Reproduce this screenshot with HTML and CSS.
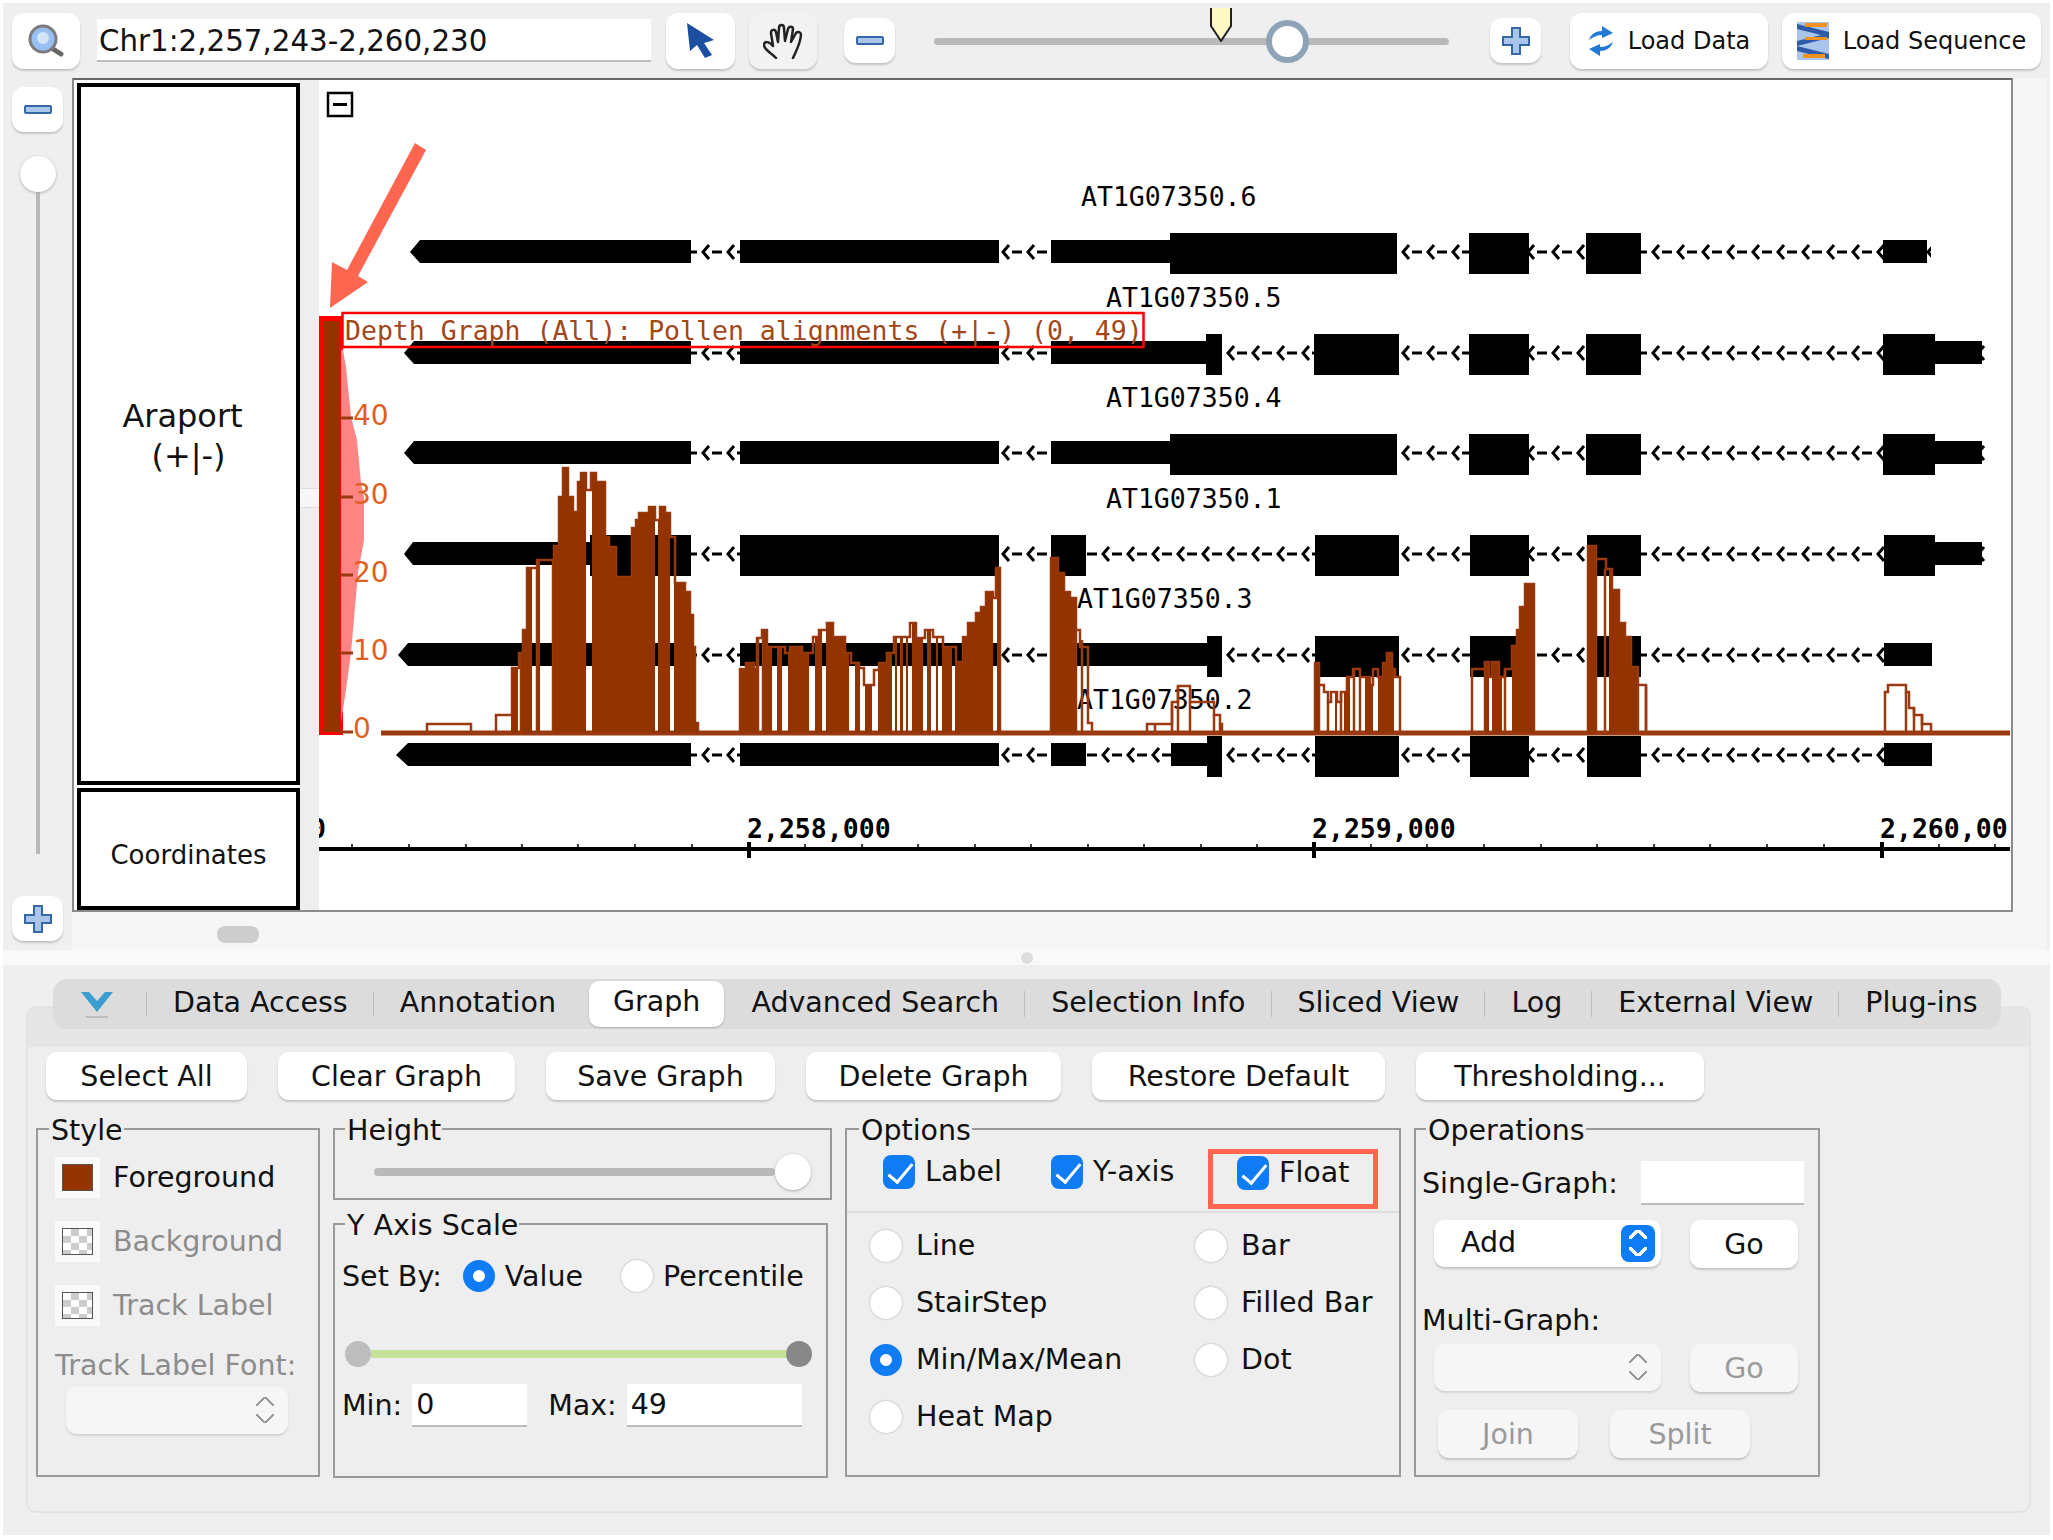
FILE: index.html
```html
<!DOCTYPE html>
<html lang="en">
<head>
    <meta charset="UTF-8">
    <meta name="viewport" content="width=device-width, initial-scale=1.0">
    <title>Genome Browser</title>
    <link rel="stylesheet" href="styles.css">
</head>
<body>
    <div class="app">
        <div class="toolbar">
            <button type="button" class="tool tool-search">
                <svg width="36" height="33" viewBox="0 0 36 33"><path d="M25 25l8 5" stroke="#666" stroke-width="5" stroke-linecap="round"/><circle cx="15" cy="15" r="13" fill="#97c0f0" stroke="#7b7b7b" stroke-width="3"/><circle cx="15" cy="14" r="6" fill="#d5e5f9"/></svg>
            </button>
            <div class="location">Chr1:2,257,243-2,260,230</div>
            <button type="button" class="tool tool-pointer">
                <svg width="28" height="36" viewBox="0 0 28 36"><path d="M0 0L3 28L10 22L18 35L25 32L17 20L27 17Z" fill="#1c4fa0"/></svg>
            </button>
            <button type="button" class="tool tool-hand">
                <svg width="40" height="36" viewBox="0 0 40 36" fill="none" stroke="#222" stroke-width="2.5" stroke-linecap="round" stroke-linejoin="round"><path d="M13 35C9 30 1 27 1 22C1 18 6 18 10 23L8 10C8 6 12 6 13 9L15 19L16 5C16 1 21 1 21 5L22 18L25 6C26 3 30 3 30 6L28 19L33 10C35 8 38 9 38 12C37 22 33 28 30 35"/></svg>
            </button>
            <button type="button" class="tool tool-small tool-minus"><span class="minus-bar"></span></button>
            <div class="zoom-slider">
                <svg class="zoom-marker" width="24" height="34" viewBox="0 0 24 34"><path d="M2 0V18L12 33L22 18V0" fill="#fdf8c4" stroke="#222" stroke-width="2"/></svg>
                <span class="zoom-thumb"></span>
            </div>
            <button type="button" class="tool tool-small tool-plus"><span class="plus-sign"></span></button>
            <button type="button" class="tool tool-load tool-data">
                <svg width="26" height="30" viewBox="0 0 26 30" fill="#2079d6"><path d="M1 14C3 8 8 5 14 5V0L25 7L14 12V9C9 9 5 11 1 14Z"/><path d="M25 16C23 22 18 25 12 25V30L1 23L12 18V21C17 21 21 19 25 16Z"/></svg>
                Load Data
            </button>
            <button type="button" class="tool tool-load tool-sequence">
                <svg width="32" height="38" viewBox="0 0 32 38"><rect width="32" height="38" fill="#a9c5ec"/><path d="M0 2L32 10V15L0 7ZM32 16L0 24V19L32 11ZM0 24L32 32V37L0 29Z" fill="#2f5aa8"/><path d="M8 1H30V5H8ZM8 15H30V18H8ZM6 32H28V36H6Z" fill="#f0921e"/></svg>
                Load Sequence
            </button>
        </div>

        <div class="browser">
            <div class="rail">
                <button type="button" class="tool tool-small rail-minus"><span class="minus-bar"></span></button>
                <div class="rail-slider"><span class="rail-thumb"></span></div>
                <button type="button" class="tool tool-small rail-plus"><span class="plus-sign"></span></button>
            </div>
            <div class="view">
                <div class="frame">
                    <div class="track-labels">
                        <div class="track-label track-label-main"><span class="track-name">Araport</span>(+|-)</div>
                        <div class="track-label track-label-coords">Coordinates</div>
                    </div>
                    <div class="strip"><span class="strip-grip"></span></div>
                    <svg class="tracks" width="1692" height="830" viewBox="319 80 1692 830">
                        <defs>
                            <pattern id="intron" patternUnits="userSpaceOnUse" x="0" y="-10" width="25" height="20">
                                <path d="M9 3L3 10L9 17M12 10H22" fill="none" stroke="#000" stroke-width="3"/>
                            </pattern>
                            <clipPath id="graph-solid">
                                <rect x="511" y="300" width="7" height="440"/>
                                <rect x="521" y="300" width="11" height="440"/>
                                <rect x="537" y="300" width="3" height="440"/>
                                <rect x="553" y="300" width="33" height="440"/>
                                <rect x="592" y="300" width="63" height="440"/>
                                <rect x="658" y="300" width="12" height="440"/>
                                <rect x="674" y="300" width="26" height="440"/>
                                <rect x="740" y="300" width="18" height="440"/>
                                <rect x="763" y="300" width="9" height="440"/>
                                <rect x="777" y="300" width="5" height="440"/>
                                <rect x="788" y="300" width="21" height="440"/>
                                <rect x="815" y="300" width="7" height="440"/>
                                <rect x="826" y="300" width="23" height="440"/>
                                <rect x="855" y="300" width="5" height="440"/>
                                <rect x="865" y="300" width="7" height="440"/>
                                <rect x="878" y="300" width="14" height="440"/>
                                <rect x="895" y="300" width="2" height="440"/>
                                <rect x="900" y="300" width="3" height="440"/>
                                <rect x="906" y="300" width="2" height="440"/>
                                <rect x="912" y="300" width="11" height="440"/>
                                <rect x="927" y="300" width="4" height="440"/>
                                <rect x="936" y="300" width="2" height="440"/>
                                <rect x="942" y="300" width="10" height="440"/>
                                <rect x="955" y="300" width="38" height="440"/>
                                <rect x="997" y="300" width="3" height="440"/>
                                <rect x="1051" y="300" width="25" height="440"/>
                                <rect x="1315" y="300" width="4" height="440"/>
                                <rect x="1327" y="300" width="2" height="440"/>
                                <rect x="1335" y="300" width="2" height="440"/>
                                <rect x="1344" y="300" width="6" height="440"/>
                                <rect x="1365" y="300" width="8" height="440"/>
                                <rect x="1378" y="300" width="16" height="440"/>
                                <rect x="1485" y="300" width="4" height="440"/>
                                <rect x="1492" y="300" width="10" height="440"/>
                                <rect x="1512" y="300" width="22" height="440"/>
                                <rect x="1588" y="300" width="8" height="440"/>
                                <rect x="1609" y="300" width="28" height="440"/>
                            </clipPath>
                        </defs>

                        <rect class="collapse-box" x="328" y="93" width="24" height="23"/>
                        <path class="collapse-bar" d="M333 104.5H347"/>

                        <!-- gene models -->
                        <text class="gene-label" x="1081" y="206">AT1G07350.6</text>
                        <g transform="translate(0,252)">
                            <rect fill="url(#intron)" x="691" y="-10" width="1240" height="20"/>
                            <path d="M410 0L420 -12H691V11H420Z"/>
                            <rect class="thin" x="740" width="259"/>
                            <rect class="thin" x="1051" width="119"/>
                            <rect class="thick" x="1170" width="227"/>
                            <rect class="thick" x="1469" width="60"/>
                            <rect class="thick" x="1586" width="55"/>
                            <rect class="thin" x="1883" width="44"/>
                        </g>
                        <text class="gene-label" x="1106" y="307">AT1G07350.5</text>
                        <g transform="translate(0,353)">
                            <rect fill="url(#intron)" x="691" y="-10" width="1295" height="20"/>
                            <path d="M404 0L414 -12H691V11H414Z"/>
                            <rect class="thin" x="740" width="259"/>
                            <rect class="thin" x="1051" width="155"/>
                            <rect class="thick" x="1206" width="16"/>
                            <rect class="thick" x="1314" width="85"/>
                            <rect class="thick" x="1469" width="60"/>
                            <rect class="thick" x="1586" width="55"/>
                            <rect class="thick" x="1883" width="52"/>
                            <rect class="thin" x="1935" width="47"/>
                        </g>
                        <text class="gene-label" x="1106" y="407">AT1G07350.4</text>
                        <g transform="translate(0,453)">
                            <rect fill="url(#intron)" x="691" y="-10" width="1295" height="20"/>
                            <path d="M404 0L414 -12H691V11H414Z"/>
                            <rect class="thin" x="740" width="259"/>
                            <rect class="thin" x="1051" width="119"/>
                            <rect class="thick" x="1170" width="227"/>
                            <rect class="thick" x="1469" width="60"/>
                            <rect class="thick" x="1586" width="55"/>
                            <rect class="thick" x="1883" width="52"/>
                            <rect class="thin" x="1935" width="47"/>
                        </g>
                        <text class="gene-label" x="1106" y="508">AT1G07350.1</text>
                        <g transform="translate(0,554)">
                            <rect fill="url(#intron)" x="691" y="-10" width="1295" height="20"/>
                            <path d="M404 0L413 -12H590V11H413Z"/>
                            <rect class="thick" x="590" width="101"/>
                            <rect class="thick" x="740" width="259"/>
                            <rect class="thick" x="1051" width="35"/>
                            <rect class="thick" x="1315" width="84"/>
                            <rect class="thick" x="1470" width="59"/>
                            <rect class="thick" x="1587" width="54"/>
                            <rect class="thick" x="1884" width="51"/>
                            <rect class="thin" x="1935" width="47"/>
                        </g>
                        <text class="gene-label" x="1077" y="608">AT1G07350.3</text>
                        <g transform="translate(0,655)">
                            <rect fill="url(#intron)" x="691" y="-10" width="1195" height="20"/>
                            <path d="M398 0L408 -12H691V11H408Z"/>
                            <rect class="thin" x="740" width="259"/>
                            <rect class="thin" x="1051" width="156"/>
                            <rect class="thick" x="1207" width="15"/>
                            <rect class="thick" x="1315" width="84"/>
                            <rect class="thick" x="1470" width="59"/>
                            <rect class="thick" x="1587" width="54"/>
                            <rect class="thin" x="1884" width="48"/>
                        </g>
                        <text class="gene-label" x="1077" y="709">AT1G07350.2</text>
                        <g transform="translate(0,755)">
                            <rect fill="url(#intron)" x="691" y="-10" width="1195" height="20"/>
                            <path d="M396 0L408 -12H691V11H408Z"/>
                            <rect class="thin" x="740" width="259"/>
                            <rect class="thin" x="1051" width="35"/>
                            <rect class="thin" x="1171" width="36"/>
                            <rect class="thick" x="1207" width="15"/>
                            <rect class="thick" x="1315" width="84"/>
                            <rect class="thick" x="1470" width="59"/>
                            <rect class="thick" x="1587" width="54"/>
                            <rect class="thin" x="1884" width="48"/>
                        </g>

                        <!-- depth graph -->
                        <path class="graph-base" d="M381 733H2010"/>
                        <path class="graph-line" d="M381 733H427V724H471V733H496V715H512V668H519V653H523V630H527V568H537V560H554V546H559V497H563V468H568V497H573V512H578V482H581V473H586V490H591V473H596V482H605V537H609V547H616V577H632V528H636V520H639V513H649V507H655V520H660V507H665V513H670V537H675V583H685V592H690V615H693V647H695V723H698V733H740V669H746V663H754V669H757V638H762V630H767V647H785V653H790V647H802V653H813V637H819V630H827V623H833V637H845V653H851V663H859V668H864V685H874V670H879V663H887V653H894V637H910V623H916V638H925V630H933V637H943V647H956V662H963V637H968V623H976V613H981V607H986V592H993V598H996V568H1000V733H1051V558H1058V573H1064V592H1070V598H1076V630H1080V647H1088V723H1092V733H1147V724H1172V702H1178V686H1190V702H1214V715H1220V724H1222V733H1315V663H1319V685H1324V692H1328V702H1331V692H1337V702H1341V692H1347V677H1353V669H1360V677H1370V685H1373V669H1378V677H1383V663H1387V653H1392V669H1395V677H1400V733H1472V669H1485V662H1489V677H1492V662H1499V677H1505V669H1512V646H1517V630H1520V607H1525V584H1534V733H1588V546H1596V559H1606V569H1612V590H1619V623H1625V637H1631V667H1638V685H1646V733H1885V692H1888V685H1906V692H1909V708H1914V715H1922V724H1931V733H2010"/>
                        <path class="graph-line" d="M1172 733V702M1178 733V686M1190 733V702M1214 733V715M1220 733V724M1155 733V724M1082 733V640M1076 733V630M1319 733V685M1328 733V702M1341 733V692M1354 733V669M1360 733V677M1485 733V662M1505 733V669M1596 733V559M1605 733V569M1638 733V685M1646 733V685M1906 733V692M1914 733V708M1922 733V715M537 733V568M553 733V560M521 733V653M513 733V668M758 733V638M763 733V630"/>
                        <path class="graph-fill" clip-path="url(#graph-solid)" d="M381 733H427V724H471V733H496V715H512V668H519V653H523V630H527V568H537V560H554V546H559V497H563V468H568V497H573V512H578V482H581V473H586V490H591V473H596V482H605V537H609V547H616V577H632V528H636V520H639V513H649V507H655V520H660V507H665V513H670V537H675V583H685V592H690V615H693V647H695V723H698V733H740V669H746V663H754V669H757V638H762V630H767V647H785V653H790V647H802V653H813V637H819V630H827V623H833V637H845V653H851V663H859V668H864V685H874V670H879V663H887V653H894V637H910V623H916V638H925V630H933V637H943V647H956V662H963V637H968V623H976V613H981V607H986V592H993V598H996V568H1000V733H1051V558H1058V573H1064V592H1070V598H1076V733H1315V663H1319V685H1324V692H1328V702H1331V692H1337V702H1341V692H1347V677H1353V669H1360V677H1370V685H1373V669H1378V677H1383V663H1387V653H1392V669H1395V677H1400V733H1472V669H1485V662H1489V677H1492V662H1499V677H1505V669H1512V646H1517V630H1520V607H1525V584H1534V733H1588V546H1596V559H1606V569H1612V590H1619V623H1625V637H1631V667H1638V685H1638V733Z"/>

                        <!-- y axis -->
                        <rect class="axis-border" x="319" y="316" width="24" height="419"/>
                        <rect class="axis-bar" x="323" y="321" width="17" height="411"/>
                        <path class="axis-dist" d="M343 350L346 367L351 417L357 440L361 483L364 497V540L358 573L355 607L351 653L346 690L341 723V350Z"/>
                        <path class="axis-tick" d="M340 732H353M340 653H353M340 575H353M340 497H353M340 418H353"/>
                        <text class="axis-num" x="353" y="738">0</text>
                        <text class="axis-num" x="353" y="660">10</text>
                        <text class="axis-num" x="353" y="582">20</text>
                        <text class="axis-num" x="353" y="504">30</text>
                        <text class="axis-num" x="353" y="425">40</text>

                        <rect class="graph-label-box" x="342.5" y="313" width="801" height="34"/>
                        <text class="graph-label" x="345" y="340">Depth Graph (All): Pollen alignments (+|-) (0, 49)</text>

                        <!-- coordinates -->
                        <text class="coord-label" x="326" y="838" text-anchor="end">0</text>
                        <text class="coord-label" x="747" y="838">2,258,000</text>
                        <text class="coord-label" x="1312" y="838">2,259,000</text>
                        <text class="coord-label" x="1880" y="838">2,260,00</text>
                        <path class="coord-line" d="M319 849H2010"/>
                        <path class="coord-major" d="M749 842V858M1314 842V858M1882 842V858"/>
                        <path class="coord-minor" d="M352 844V849M409 844V849M466 844V849M522 844V849M578 844V849M635 844V849M692 844V849M805 844V849M862 844V849M918 844V849M975 844V849M1031 844V849M1088 844V849M1144 844V849M1201 844V849M1257 844V849M1371 844V849M1427 844V849M1484 844V849M1541 844V849M1597 844V849M1654 844V849M1710 844V849M1767 844V849M1824 844V849M1939 844V849M1995 844V849"/>

                        <!-- annotation arrow -->
                        <path class="callout-arrow" d="M415 143L426 150L358 276L368 282L330 308L332 262L347 270Z"/>
                    </svg>
                </div>
                <div class="hscroll"><span class="hscroll-thumb"></span></div>
            </div>
        </div>

        <div class="splitter"><span class="splitter-dot"></span></div>

        <div class="panel">
            <div class="pane">
                <div class="tabs">
                    <span class="tab tab-toggle">
                        <svg width="34" height="28" viewBox="0 0 34 28"><path d="M1 1H9L17 10L25 1H33L17 21Z" fill="#3a9fd0"/><path d="M6 26H28" stroke="#bdbdbd" stroke-width="2"/></svg>
                    </span>
                    <span class="tab">Data Access</span>
                    <span class="tab">Annotation</span>
                    <span class="tab tab-active">Graph</span>
                    <span class="tab tab-after-active">Advanced Search</span>
                    <span class="tab">Selection Info</span>
                    <span class="tab">Sliced View</span>
                    <span class="tab">Log</span>
                    <span class="tab tab-external">External View</span>
                    <span class="tab">Plug-ins</span>
                </div>
                <div class="pane-body">
                    <div class="actions">
                        <button type="button" class="btn btn-select">Select All</button>
                        <button type="button" class="btn btn-clear">Clear Graph</button>
                        <button type="button" class="btn btn-save">Save Graph</button>
                        <button type="button" class="btn btn-delete">Delete Graph</button>
                        <button type="button" class="btn btn-restore">Restore Default</button>
                        <button type="button" class="btn btn-threshold">Thresholding...</button>
                    </div>
                    <div class="groups">
                        <fieldset class="group group-style">
                            <legend>Style</legend>
                            <div class="style-row">
                                <span class="swatch"><span class="swatch-fill"></span></span>
                                Foreground
                            </div>
                            <div class="style-row is-off">
                                <span class="swatch"><span class="swatch-fill swatch-empty"></span></span>
                                Background
                            </div>
                            <div class="style-row is-off">
                                <span class="swatch"><span class="swatch-fill swatch-empty"></span></span>
                                Track Label
                            </div>
                            <div class="font-label is-off">Track Label Font:</div>
                            <div class="select select-font is-disabled"><span class="stepper"></span></div>
                        </fieldset>

                        <div class="group-stack">
                            <fieldset class="group group-height">
                                <legend>Height</legend>
                                <div class="height-slider"><span class="height-thumb"></span></div>
                            </fieldset>
                            <fieldset class="group group-scale">
                                <legend>Y Axis Scale</legend>
                                <div class="setby-row">
                                    <span class="setby-label">Set By:</span>
                                    <span class="radio radio-on"></span><span class="setby-value">Value</span>
                                    <span class="radio"></span><span>Percentile</span>
                                </div>
                                <div class="range">
                                    <span class="range-knob"></span>
                                    <span class="range-bar"></span>
                                    <span class="range-knob range-knob-end"></span>
                                </div>
                                <div class="minmax-row">
                                    <span>Min:</span><span class="field field-min">0</span>
                                    <span class="max-label">Max:</span><span class="field field-max">49</span>
                                </div>
                            </fieldset>
                        </div>

                        <fieldset class="group group-options">
                            <legend>Options</legend>
                            <div class="checks">
                                <span class="check"></span><span class="check-label">Label</span>
                                <span class="check check-yaxis"></span><span class="check-label">Y-axis</span>
                                <span class="check-callout"><span class="check"></span><span class="check-label">Float</span></span>
                            </div>
                            <div class="graph-types">
                                <div class="type"><span class="radio"></span>Line</div>
                                <div class="type"><span class="radio"></span>Bar</div>
                                <div class="type"><span class="radio"></span>StairStep</div>
                                <div class="type"><span class="radio"></span>Filled Bar</div>
                                <div class="type"><span class="radio radio-on"></span>Min/Max/Mean</div>
                                <div class="type"><span class="radio"></span>Dot</div>
                                <div class="type"><span class="radio"></span>Heat Map</div>
                            </div>
                        </fieldset>

                        <fieldset class="group group-operations">
                            <legend>Operations</legend>
                            <div class="single-row">
                                <span>Single-Graph:</span><span class="field field-single"></span>
                            </div>
                            <div class="ops-row">
                                <div class="select select-add">Add<span class="stepper stepper-on"></span></div>
                                <button type="button" class="btn btn-go">Go</button>
                            </div>
                            <div class="multi-label">Multi-Graph:</div>
                            <div class="ops-row ops-row-multi">
                                <div class="select select-multi is-disabled"><span class="stepper"></span></div>
                                <button type="button" class="btn btn-go is-disabled">Go</button>
                            </div>
                            <div class="ops-row ops-row-join">
                                <button type="button" class="btn btn-join is-disabled">Join</button>
                                <button type="button" class="btn btn-join is-disabled">Split</button>
                            </div>
                        </fieldset>
                    </div>
                </div>
            </div>
        </div>
    </div>
</body>
</html>
```

FILE: styles.css
```css
*{
    margin: 0;
    padding: 0;
    box-sizing: border-box;
}
body{
    width: 2053px;
    height: 1540px;
    background-color: #fff;
    font-family: "DejaVu Sans", sans-serif;
    font-size: 28.5px;
    color: #111;
    overflow: hidden;
}
button{
    font-family: inherit;
    font-size: inherit;
    color: inherit;
    border: none;
    cursor: pointer;
}
.app{
    margin: 3px 0 0 3px;
    width: 2047px;
    height: 1532px;
    background-color: #efefef;
    display: flex;
    flex-direction: column;
}

/* top toolbar */
.toolbar{
    height: 75px;
    flex: none;
    display: flex;
    align-items: center;
    padding-left: 9px;
}
.tool{
    background-color: #fff;
    border-radius: 12px;
    box-shadow: 0 2px 2px #c4c4c4;
    height: 56px;
    display: flex;
    align-items: center;
    justify-content: center;
    flex: none;
}
.tool-small{
    width: 51px;
    height: 45px;
}
.tool-search{
    width: 68px;
}
.location{
    width: 554px;
    height: 43px;
    margin-left: 17px;
    padding-left: 2px;
    background-color: #fff;
    border-bottom: 2px solid #bbb;
    font-size: 29.3px;
    line-height: 45px;
    white-space: nowrap;
}
.tool-pointer{
    width: 69px;
    margin-left: 15px;
}
.tool-hand{
    width: 68px;
    margin-left: 14px;
    background-color: #f2f2f2;
}
.tool-minus{
    margin-left: 27px;
}
.minus-bar{
    display: block;
    width: 28px;
    height: 9px;
    background-color: #a9c6ea;
    border: 2px solid #3566a8;
    border-radius: 2px;
}
.plus-sign{
    display: block;
    width: 28px;
    height: 28px;
    background:
        linear-gradient(#a9c6ea, #a9c6ea) center / 6px 24px no-repeat,
        linear-gradient(#a9c6ea, #a9c6ea) center / 24px 6px no-repeat,
        linear-gradient(#3566a8, #3566a8) center / 10px 28px no-repeat,
        linear-gradient(#3566a8, #3566a8) center / 28px 10px no-repeat;
}
.zoom-slider{
    position: relative;
    width: 515px;
    height: 7px;
    margin: 2px 0 0 39px;
    background-color: #b9b9b9;
    border-radius: 4px;
    flex: none;
}
.zoom-marker{
    position: absolute;
    left: 275px;
    top: -30px;
}
.zoom-thumb{
    position: absolute;
    left: 332px;
    top: -18px;
    width: 43px;
    height: 43px;
    background-color: #fff;
    border: 6px solid #8fa3b8;
    border-radius: 50%;
}
.tool-plus{
    margin-left: 41px;
}
.tool-load{
    gap: 14px;
    font-size: 24px;
}
.tool-data{
    width: 198px;
    margin-left: 29px;
}
.tool-sequence{
    width: 259px;
    margin-left: 14px;
}

/* tracks */
.browser{
    height: 872px;
    flex: none;
    display: flex;
}
.rail{
    width: 69px;
    flex: none;
    padding: 9px 0 0 9px;
}
.rail-slider{
    position: relative;
    width: 4px;
    height: 698px;
    margin: 24px 0 42px 24px;
    background-color: #b9b9b9;
}
.rail-thumb{
    position: absolute;
    left: -16px;
    top: 0;
    width: 36px;
    height: 36px;
    background-color: #fff;
    border-radius: 50%;
    box-shadow: 0 1px 3px #aaa;
}
.view{
    width: 1975px;
    flex: none;
    background-color: #f6f6f6;
}
.frame{
    width: 1941px;
    height: 834px;
    background-color: #fff;
    border: 2px solid #8b8b8b;
    border-top-color: #666;
    display: flex;
}
.track-labels{
    width: 226px;
    flex: none;
    padding: 3px 0 0 3px;
    display: flex;
    flex-direction: column;
    gap: 3px;
}
.track-label{
    border: 4px solid #000;
    display: flex;
    align-items: center;
    justify-content: center;
    text-align: center;
}
.track-label-main{
    height: 703px;
    flex-direction: column;
    padding-top: 4px;
    font-size: 32px;
    line-height: 40px;
}
.track-name{
    margin-right: 12px;
}
.track-label-coords{
    height: 122px;
    padding-top: 12px;
    font-size: 26px;
}
.strip{
    width: 19px;
    flex: none;
    background-color: #eee;
    padding-top: 408px;
}
.strip-grip{
    display: block;
    height: 20px;
    background-color: #f7f7f7;
    border-top: 1px solid #ddd;
    border-bottom: 1px solid #ddd;
}
.tracks{
    display: block;
    flex: none;
}
.thin{
    y: -12px;
    height: 23px;
}
.thick{
    y: -19px;
    height: 41px;
}
.gene-label{
    font-family: "DejaVu Sans Mono", monospace;
    font-size: 26.5px;
}
.collapse-box{
    fill: #fff;
    stroke: #000;
    stroke-width: 2.5;
}
.collapse-bar{
    stroke: #000;
    stroke-width: 3;
}
.graph-base{
    fill: none;
    stroke: #9a3a10;
    stroke-width: 5;
}
.graph-line{
    fill: none;
    stroke: #9a3a10;
    stroke-width: 2.5;
}
.graph-fill{
    fill: #933300;
}
.axis-border{
    fill: #f00;
}
.axis-bar{
    fill: #933300;
}
.axis-dist{
    fill: #ff8585;
}
.axis-tick{
    stroke: #9a3a10;
    stroke-width: 3;
}
.axis-num{
    font-family: "DejaVu Sans", sans-serif;
    font-size: 28px;
    fill: #df5f1d;
}
.graph-label-box{
    fill: none;
    stroke: #f00;
    stroke-width: 2.5;
}
.graph-label{
    font-family: "DejaVu Sans Mono", monospace;
    font-size: 26.5px;
    fill: #a3461a;
}
.coord-label{
    font-family: "DejaVu Sans Mono", monospace;
    font-size: 26.5px;
    font-weight: bold;
}
.coord-line{
    stroke: #000;
    stroke-width: 4;
}
.coord-major{
    stroke: #000;
    stroke-width: 4;
}
.coord-minor{
    stroke: #000;
    stroke-width: 1.5;
}
.callout-arrow{
    fill: #ff6650;
}
.hscroll{
    height: 38px;
    padding: 14px 0 0 145px;
}
.hscroll-thumb{
    display: block;
    width: 42px;
    height: 17px;
    background-color: #cdcdcd;
    border-radius: 8px;
}
.splitter{
    height: 15px;
    flex: none;
    background-color: #f9f9f9;
    display: flex;
    justify-content: center;
    align-items: center;
}
.splitter-dot{
    width: 12px;
    height: 12px;
    background-color: #ddd;
    border-radius: 50%;
}

/* bottom panel */
.panel{
    flex: 1;
    padding: 41px 19px 0 23px;
}
.pane{
    height: 507px;
    background: linear-gradient(#e6e6e6 0 39px, #eee 39px);
    border: 2px solid #e3e3e3;
    border-radius: 10px;
}
.tabs{
    height: 50px;
    width: 1948px;
    margin: -29px 0 0 25px;
    background-color: #dcdcdc;
    border-radius: 14px;
    display: flex;
    align-items: center;
}
.tab{
    flex: none;
    padding: 0 26px;
    height: 26px;
    line-height: 23px;
    margin-left: -1px;
    border-left: 1px solid #bdbdbd;
    white-space: nowrap;
}
.tab:first-child,
.tab-active,
.tab-after-active{
    border-left: none;
}
.tab-toggle{
    width: 95px;
    padding: 0 0 0 28px;
    display: flex;
}
.tab-active{
    height: 46px;
    line-height: 41px;
    padding: 0 24px;
    margin-left: 7px;
    background-color: #fff;
    border-radius: 10px;
    box-shadow: 0 1px 2px #aaa;
}
.tab-after-active{
    margin-left: 1px;
}
.tab-external{
    margin-left: 3px;
}
.pane-body{
    margin-top: 15px;
    padding: 8px 0 0 18px;
}
.actions{
    display: flex;
    height: 48px;
    gap: 31px;
}
.btn{
    background-color: #fff;
    border-radius: 11px;
    box-shadow: 0 2px 2px #c4c4c4;
    flex: none;
    height: 48px;
}
.btn.is-disabled{
    background-color: #f6f6f6;
    color: #9a9a9a;
}
.btn-select{
    width: 201px;
}
.btn-clear{
    width: 237px;
}
.btn-save{
    width: 229px;
}
.btn-delete{
    width: 255px;
}
.btn-restore{
    width: 293px;
}
.btn-threshold{
    width: 288px;
}
.groups{
    display: flex;
    gap: 13px;
    margin: 12px 0 0 -10px;
    height: 365px;
}
.group{
    border: 2px solid #9a9a9a;
    flex: none;
    height: 365px;
}
.group legend{
    padding: 0 1px 0 2px;
    height: 34px;
    line-height: 38px;
}
.group-style{
    width: 284px;
    padding: 11px 0 0 17px;
}
.group-style legend{
    margin-left: -6px;
}
.is-off{
    color: #8c8c8c;
}
.style-row{
    display: flex;
    align-items: center;
    gap: 13px;
    height: 41px;
    margin-bottom: 23px;
}
.swatch{
    width: 45px;
    height: 41px;
    padding: 7px;
    background-color: #f9f9f9;
    flex: none;
}
.swatch-fill{
    display: block;
    width: 100%;
    height: 100%;
    background-color: #933300;
    border: 1px solid #555;
}
.swatch-empty{
    background-color: #fff;
    background-image: conic-gradient(#ccc 25%, #fff 0 50%, #ccc 0 75%, #fff 0);
    background-size: 16px 14px;
}
.font-label{
    height: 34px;
    line-height: 34px;
    white-space: nowrap;
}
.select{
    position: relative;
    background-color: #fff;
    border-radius: 11px;
    box-shadow: 0 2px 2px #c4c4c4;
    height: 47px;
    line-height: 46px;
}
.select.is-disabled{
    background-color: #f6f6f6;
    box-shadow: 0 2px 2px #d4d4d4;
}
.select-font{
    width: 222px;
    margin: 4px 0 0 11px;
}
.stepper{
    position: absolute;
    right: 6px;
    top: 5px;
    width: 34px;
    height: 37px;
    border-radius: 8px;
    background:
        linear-gradient(-45deg, transparent 42%, #999 42% 58%, transparent 58%) 8px 5px / 9px 9px no-repeat,
        linear-gradient(45deg, transparent 42%, #999 42% 58%, transparent 58%) 17px 5px / 9px 9px no-repeat,
        linear-gradient(45deg, transparent 42%, #999 42% 58%, transparent 58%) 8px 22px / 9px 9px no-repeat,
        linear-gradient(-45deg, transparent 42%, #999 42% 58%, transparent 58%) 17px 22px / 9px 9px no-repeat;
}
.stepper-on{
    background:
        linear-gradient(-45deg, transparent 38%, #fff 38% 62%, transparent 62%) 8px 5px / 9px 9px no-repeat,
        linear-gradient(45deg, transparent 38%, #fff 38% 62%, transparent 62%) 17px 5px / 9px 9px no-repeat,
        linear-gradient(45deg, transparent 38%, #fff 38% 62%, transparent 62%) 8px 22px / 9px 9px no-repeat,
        linear-gradient(-45deg, transparent 38%, #fff 38% 62%, transparent 62%) 17px 22px / 9px 9px no-repeat,
        #0f7cf5;
}
.group-stack{
    width: 499px;
    flex: none;
    display: flex;
    flex-direction: column;
    gap: 7px;
}
.group-height{
    height: 88px;
    padding: 0 0 0 39px;
}
.group-height legend{
    margin-left: -29px;
}
.height-slider{
    position: relative;
    width: 401px;
    height: 8px;
    margin-top: 22px;
    background-color: #b9b9b9;
    border-radius: 4px;
}
.height-thumb{
    position: absolute;
    left: 401px;
    top: -14px;
    width: 36px;
    height: 36px;
    background-color: #fff;
    border-radius: 50%;
    box-shadow: 0 1px 3px #aaa;
}
.group-scale{
    width: 495px;
    height: 271px;
    padding: 0 0 0 7px;
}
.group-scale legend{
    margin-left: 3px;
}
.setby-row{
    display: flex;
    align-items: center;
    height: 34px;
    margin-top: 18px;
}
.setby-label{
    margin-right: 21px;
}
.setby-value{
    margin-right: 38px;
}
.radio{
    width: 32px;
    height: 32px;
    margin-right: 10px;
    background-color: #fff;
    border-radius: 50%;
    box-shadow: 0 0 2px #999;
    flex: none;
}
.radio-on{
    background-color: #fff;
    border: 10px solid #0f7cf5;
    box-shadow: none;
}
.range{
    display: flex;
    align-items: center;
    margin-top: 48px;
    height: 26px;
}
.range-knob{
    width: 26px;
    height: 26px;
    border-radius: 50%;
    background-color: #bdbdbd;
    flex: none;
    margin-left: 3px;
}
.range-bar{
    width: 415px;
    height: 8px;
    background-color: #c5e39a;
    flex: none;
}
.range-knob-end{
    background-color: #888;
    margin-left: 0;
}
.minmax-row{
    display: flex;
    align-items: center;
    margin-top: 17px;
}
.field{
    display: block;
    height: 43px;
    line-height: 42px;
    padding-left: 4px;
    background-color: #fff;
    border-bottom: 2px solid #bbb;
    flex: none;
}
.field-min{
    width: 115px;
    margin-left: 10px;
}
.max-label{
    margin-left: 21px;
}
.field-max{
    width: 175px;
    margin-left: 10px;
}
.group-options{
    width: 556px;
    padding: 0;
}
.group-options legend{
    margin-left: 12px;
}
.checks{
    display: flex;
    align-items: flex-start;
    height: 67px;
    padding: 9px 0 0 36px;
    border-bottom: 2px solid #ddd;
    position: relative;
}
.check{
    width: 32px;
    height: 34px;
    border-radius: 8px;
    background: #0f7cf5;
    flex: none;
    position: relative;
}
.check::after{
    content: "";
    position: absolute;
    left: 11px;
    top: 3px;
    width: 10px;
    height: 22px;
    border-right: 3px solid #fff;
    border-bottom: 3px solid #fff;
    transform: rotate(40deg);
}
.check-label{
    margin-left: 10px;
    line-height: 34px;
}
.check-yaxis{
    margin-left: 49px;
}
.check-callout{
    position: absolute;
    left: 361px;
    top: 3px;
    width: 170px;
    height: 60px;
    padding: 2px 0 0 24px;
    border: 5px solid #ff6650;
    display: flex;
    align-items: flex-start;
}
.graph-types{
    display: grid;
    grid-template-columns: 325px 1fr;
    grid-auto-rows: 57px;
    padding: 0 0 0 23px;
    margin-top: 4px;
}
.type{
    display: flex;
    align-items: center;
    white-space: nowrap;
}
.type .radio{
    margin-right: 14px;
}
.group-operations{
    width: 406px;
    padding: 0 0 0 6px;
}
.group-operations legend{
    margin-left: 4px;
}
.single-row{
    display: flex;
    align-items: center;
    height: 44px;
    margin-top: 15px;
}
.field-single{
    width: 163px;
    height: 44px;
    margin-left: 23px;
}
.ops-row{
    display: flex;
    align-items: flex-start;
    padding-left: 12px;
    margin-top: 15px;
}
.select-add,
.select-multi{
    width: 227px;
    flex: none;
}
.select-add{
    padding-left: 27px;
}
.btn-go{
    width: 108px;
    margin-left: 29px;
}
.multi-label{
    height: 34px;
    line-height: 34px;
    margin-top: 36px;
}
.ops-row-multi{
    margin-top: 6px;
}
.ops-row-join{
    margin-top: 18px;
    padding-left: 16px;
    gap: 32px;
}
.btn-join{
    width: 140px;
}
```
